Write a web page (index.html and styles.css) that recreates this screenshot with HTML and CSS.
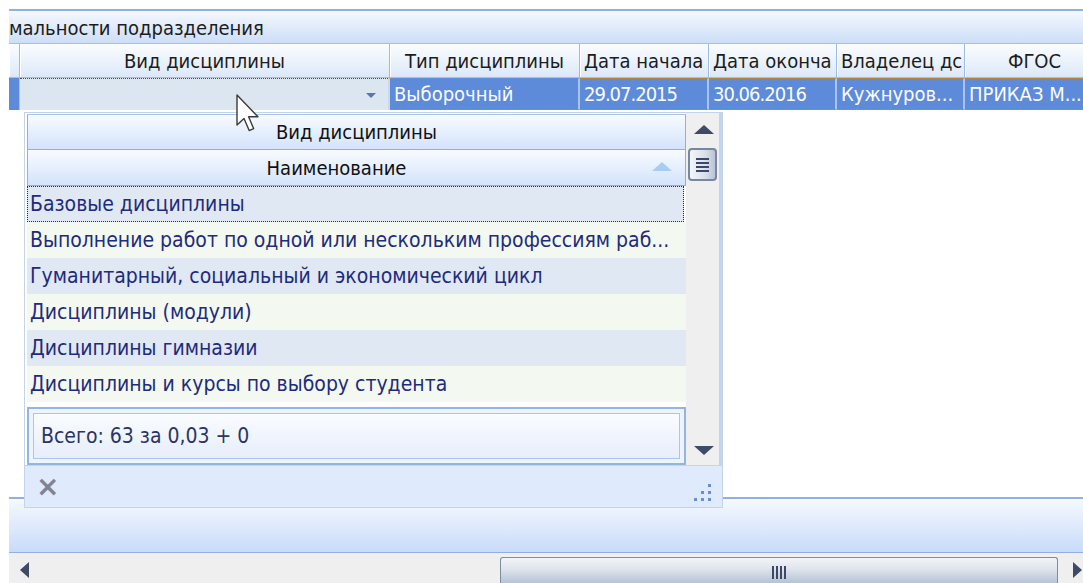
FILE: index.html
```html
<!DOCTYPE html>
<html lang="ru">
<head>
<meta charset="utf-8">
<title>Виды дисциплин</title>
<link rel="stylesheet" href="styles.css">
</head>
<body>
<div class="screen">
  <div class="group">
    <div class="group-title"><span>мальности подразделения</span></div>
    <div class="grid">
      <div class="grid-head">
        <div class="cell ind"></div>
        <div class="cell c-vid center">Вид дисциплины</div>
        <div class="cell c-tip center">Тип дисциплины</div>
        <div class="cell c-start">Дата начала</div>
        <div class="cell c-end">Дата оконча</div>
        <div class="cell c-own">Владелец дс</div>
        <div class="cell c-fgos center">ФГОС</div>
      </div>
      <div class="grid-row">
        <div class="cell ind sel"></div>
        <div class="cell c-vid editor"><span class="combo-arrow"></span></div>
        <div class="cell c-tip sel">Выборочный</div>
        <div class="cell c-start sel date">29.07.2015</div>
        <div class="cell c-end sel date">30.06.2016</div>
        <div class="cell c-own sel">Кужнуров...</div>
        <div class="cell c-fgos sel">ПРИКАЗ М...</div>
      </div>
      <div class="grid-body"></div>
    </div>
    <div class="group-foot"></div>
  </div>
  <div class="hscroll">
    <span class="arrow-left"></span>
    <div class="hthumb"><span class="hgrip"></span></div>
    <span class="arrow-right"></span>
  </div>

  <div class="popup">
    <div class="pop-main">
      <div class="pop-list">
        <div class="pop-band">Вид дисциплины</div>
        <div class="pop-band sortable"><span class="band-text">Наименование</span><span class="sort-up"></span></div>
        <div class="pop-row blue focused">Базовые дисциплины</div>
        <div class="pop-row green">Выполнение работ по одной или нескольким профессиям раб...</div>
        <div class="pop-row blue">Гуманитарный, социальный и экономический цикл</div>
        <div class="pop-row green">Дисциплины (модули)</div>
        <div class="pop-row blue">Дисциплины гимназии</div>
        <div class="pop-row green">Дисциплины и курсы по выбору студента</div>
        <div class="total"><div class="total-inner">Всего: 63 за 0,03 + 0</div></div>
      </div>
      <div class="pop-scroll">
        <span class="arrow-up"></span>
        <div class="vthumb"><span class="vgrip"></span></div>
        <span class="spacer"></span>
        <span class="arrow-down"></span>
      </div>
    </div>
    <div class="pop-foot">
      <span class="close-x">×</span>
      <svg class="grip" width="20" height="20" viewBox="0 0 20 20">
        <rect x="15" y="1" width="3" height="3"/>
        <rect x="8" y="8" width="3" height="3"/>
        <rect x="15" y="8" width="3" height="3"/>
        <rect x="1" y="15" width="3" height="3"/>
        <rect x="8" y="15" width="3" height="3"/>
        <rect x="15" y="15" width="3" height="3"/>
      </svg>
    </div>
  </div>

  <svg class="cursor" width="24" height="38" viewBox="0 0 12 19">
    <path d="M0.5 0.5 L0.5 15.5 L4 12.2 L6.6 18.3 L8.8 17.3 L6.3 11.4 L11 11.4 Z" fill="#fff" stroke="#3a3a3a" stroke-width="0.7" stroke-linejoin="round"/>
  </svg>
</div>
</body>
</html>
```

FILE: styles.css
```css
html, body {
  margin: 0;
  padding: 0;
  background: #fff;
}

body {
  font-family: "DejaVu Sans Condensed", "DejaVu Sans", sans-serif;
  font-stretch: condensed;
  font-size: 20px;
  color: #1c1c1c;
}

.screen {
  position: relative;
  width: 1083px;
  height: 583px;
  overflow: hidden;
  padding: 9px 0 0 9px;
  box-sizing: border-box;
}

/* group panel */
.group {
  border-top: 2px solid #8fb0e1;
}

.group-title {
  height: 32px;
  background: linear-gradient(#f4f8fe, #cddef8);
  display: flex;
  align-items: center;
  overflow: hidden;
  white-space: nowrap;
}

.group-title span {
  padding-top: 2px;
}

/* grid */
.grid-head,
.grid-row {
  display: flex;
  white-space: nowrap;
}

.grid-head {
  height: 35px;
  box-sizing: border-box;
  border-top: 1px solid #a3bfe6;
  border-bottom: 1px solid #a3bfe6;
  background: linear-gradient(#fbfdff, #dce8f9);
}

.grid-head .cell {
  border-right: 1px solid #9fbbe3;
  box-shadow: inset 1px 0 0 #ffffff;
  display: flex;
  align-items: center;
  padding-left: 4px;
}

.cell {
  box-sizing: border-box;
  overflow: hidden;
  flex: none;
}

.cell.center {
  justify-content: center;
  padding-left: 0;
}

.ind { width: 11px; padding-left: 0 !important; }
.c-vid { width: 370px; }
.c-tip { width: 190px; }
.c-start { width: 129px; }
.c-end { width: 128px; }
.c-own { width: 128px; }
.c-fgos { width: 140px; }

.grid-row {
  height: 32px;
}

.grid-row .cell {
  display: flex;
  align-items: center;
  padding-left: 4px;
}

.grid-row .sel {
  background: #5d8bd9;
  color: #fbfcff;
  border-top: 1px dotted #b88a4a;
  border-bottom: 1px dotted #b88a4a;
  border-right: 2px solid #a7c3ee;
}

.grid-row .date {
  letter-spacing: -1px;
}

.grid-row .ind.sel {
  border: none;
  border-right: 1px solid #a7c3ee;
}

.grid-row .editor {
  background: #dce6f0;
  border-top: 1px dotted #4a4a4a;
  border-right: 2px solid #c8d8ee;
  justify-content: flex-end;
  padding-right: 12px;
}

.combo-arrow {
  width: 0;
  height: 0;
  border-left: 5px solid transparent;
  border-right: 5px solid transparent;
  border-top: 5px solid #5b77a8;
  margin-top: 2px;
}

.grid-body {
  height: 387px;
  background: #fff;
}

.group-foot {
  height: 53px;
  border-top: 2px solid #8fb0e1;
  border-bottom: 1px solid #8fb0e1;
  background: linear-gradient(#f6f9fe, #c8dbfa);
}

/* horizontal scroll bar */
.hscroll {
  height: 30px;
  background: #efefef;
  display: flex;
  align-items: flex-end;
}

.arrow-left {
  width: 0;
  height: 0;
  border-top: 8px solid transparent;
  border-bottom: 8px solid transparent;
  border-right: 9px solid #3f4a66;
  margin: 0 0 5px 11px;
}

.hthumb {
  width: 558px;
  height: 26px;
  margin-left: 471px;
  box-sizing: border-box;
  border: 1px solid #7f8ba3;
  border-bottom: none;
  border-radius: 3px 3px 0 0;
  background: linear-gradient(#f2f4f7, #dfe4ec 45%, #b7c2d6);
  display: flex;
  justify-content: center;
  align-items: center;
}

.hgrip {
  width: 14px;
  height: 13px;
  margin-top: 4px;
  background: repeating-linear-gradient(90deg, #3b4868 0 2px, transparent 2px 4px);
}

.arrow-right {
  width: 0;
  height: 0;
  border-top: 8px solid transparent;
  border-bottom: 8px solid transparent;
  border-left: 9px solid #3f4a66;
  margin: 0 0 5px 15px;
}

/* drop-down lookup */
.popup {
  position: absolute;
  left: 24px;
  top: 112px;
  width: 699px;
  height: 396px;
  box-sizing: border-box;
  border: 1px solid #c3d3ea;
  background: #fff;
  display: flex;
  flex-direction: column;
}

.pop-main {
  height: 352px;
  display: flex;
}

.pop-list {
  width: 661px;
  box-sizing: border-box;
  padding: 1px 0 0 2px;
  display: flex;
  flex-direction: column;
  background: #fff;
}

.pop-band {
  height: 36px;
  flex: none;
  box-sizing: border-box;
  border: 1px solid #8db0e2;
  border-top-color: #a9c5ec;
  background: linear-gradient(#f8fbff, #d3e3fb);
  display: flex;
  align-items: center;
  justify-content: center;
  color: #111;
}

.pop-band + .pop-band {
  border-top: none;
}

.pop-band.sortable {
  position: relative;
  padding-right: 40px;
}

.sort-up {
  position: absolute;
  right: 13px;
  top: 12px;
  width: 0;
  height: 0;
  border-left: 10px solid transparent;
  border-right: 10px solid transparent;
  border-bottom: 9px solid #a7cdf6;
}

.pop-row {
  height: 36px;
  flex: none;
  box-sizing: border-box;
  display: flex;
  align-items: center;
  padding-left: 3px;
  color: #1f2b7c;
  font-size: 21px;
  white-space: nowrap;
  overflow: hidden;
}

.pop-row.blue { background: #dfe8f3; }
.pop-row.green { background: #f3f9f0; }

.pop-row.focused {
  border: 1px dotted #2e2e2e;
  padding-left: 2px;
  margin-right: 2px;
}

.total {
  margin-top: 5px;
  height: 58px;
  box-sizing: border-box;
  border: 2px solid #95b4e3;
  padding: 4px;
  background: #eef4fd;
}

.total-inner {
  height: 100%;
  box-sizing: border-box;
  border: 1px solid #aac6ec;
  background: linear-gradient(#fafcff, #e6eefb);
  display: flex;
  align-items: center;
  padding-left: 7px;
  color: #2b3464;
  font-size: 21px;
}

.pop-scroll {
  width: 36px;
  box-sizing: border-box;
  background: #efefef;
  border-right: 3px solid #c2d5ee;
  display: flex;
  flex-direction: column;
  align-items: center;
}

.arrow-up {
  width: 0;
  height: 0;
  border-left: 10px solid transparent;
  border-right: 10px solid transparent;
  border-bottom: 9px solid #3f4a66;
  margin-top: 12px;
  margin-left: 2px;
}

.vthumb {
  width: 29px;
  height: 33px;
  margin-top: 14px;
  box-sizing: border-box;
  border: 2px solid #7886a0;
  border-radius: 4px;
  background: linear-gradient(90deg, #f4f6f9, #d9e0eb 60%, #b9c4d6);
  display: flex;
  align-items: center;
  justify-content: center;
}

.vgrip {
  width: 13px;
  height: 14px;
  background: repeating-linear-gradient(#3c4868 0 2px, transparent 2px 4px);
}

.spacer {
  flex: 1;
}

.arrow-down {
  width: 0;
  height: 0;
  border-left: 10px solid transparent;
  border-right: 10px solid transparent;
  border-top: 9px solid #3f4a66;
  margin-bottom: 10px;
  margin-left: 2px;
}

.pop-foot {
  flex: 1;
  box-sizing: border-box;
  border-top: 1px solid #c3d5ee;
  background: #dfeafc;
  display: flex;
  align-items: center;
  justify-content: space-between;
  padding: 0 9px 0 11px;
}

.close-x {
  font-family: "DejaVu Sans", sans-serif;
  font-stretch: normal;
  font-size: 28px;
  font-weight: bold;
  color: #7d8594;
  line-height: 1;
}

.grip {
  fill: #6a8fd2;
  margin-top: 12px;
}

.cursor {
  position: absolute;
  left: 236px;
  top: 94px;
}
```
